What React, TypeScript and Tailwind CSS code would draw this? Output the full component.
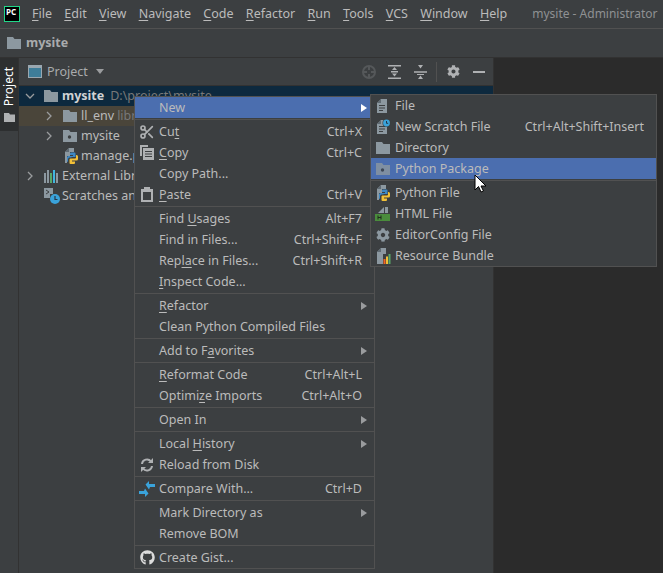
import React from 'react';
import { FaCog, FaGithub } from 'react-icons/fa';
import { Scissors } from 'lucide-react';

const Folder = ({ dot = false, className = '' }: { dot?: boolean; className?: string }) => (
  <svg width="14" height="12" viewBox="0 0 14 12" className={`shrink-0 ${className}`}>
    <path d="M0 0h6l1.5 2H14v10H0z" fill="#8c98a0" />
    {dot && <circle cx="6.5" cy="7" r="1.7" fill="#3c3f41" />}
  </svg>
);

const PyFile = () => (
  <svg width="16" height="16" viewBox="0 0 16 16">
    <path d="M6 0h5v4H7v4H4v7H2V4z" fill="#8c98a0" />
    <path d="M6 0v4H2z" fill="#5f6a72" />
    <path d="M8 4.500h3.500a1 1 0 0 1 1 1V9H8.500v.6H6.500A2 2 0 0 0 5 11.500V14h-.2A1.800 1.800 0 0 1 4 12V9.500A1.500 1.500 0 0 1 5.500 8H10V7H7V5.500a1 1 0 0 1 1-1z" fill="#3d88c4" />
    <path d="M13 7h.5A1.500 1.500 0 0 1 15 8.500V11a1.500 1.500 0 0 1-1.500 1.500H9v1h3V15a1 1 0 0 1-1 1H7.500a1 1 0 0 1-1-1v-3.500a1 1 0 0 1 1-1H12A1 1 0 0 0 13 9.500z" fill="#f2c037" />
  </svg>
);

const DocIcon = ({ clock = false }: { clock?: boolean }) => (
  <svg width="16" height="16" viewBox="0 0 16 16">
    <path d="M6 1L2 5v10h10V1z" fill="#8c98a0" />
    <path d="M6 1v4H2z" fill="#5f6a72" />
    <path d="M4 7h6v1H4zM4 9.500h6v1H4zM4 12h4v1H4z" fill="#3c3f41" />
    {clock && (
      <>
        <circle cx="11.500" cy="4" r="4" fill="#3c3f41" />
        <circle cx="11.500" cy="4" r="3.400" fill="#3aa3db" />
        <path d="M11.500 2v2.300h1.700" stroke="#23384a" strokeWidth="1" fill="none" />
      </>
    )}
  </svg>
);

const HtmlIcon = () => (
  <svg width="16" height="16" viewBox="0 0 16 16">
    <path d="M9 1v6H3z" fill="#8c98a0" />
    <path d="M10 1h3v6h-3z" fill="#8c98a0" />
    <rect x="0" y="8" width="15" height="7" fill="#4a8c3c" />
    <path d="M3 9.500v4M6 9.500v4M3 11.500h3" stroke="#1f2a1c" strokeWidth="1" fill="none" />
  </svg>
);

const BundleIcon = () => (
  <svg width="16" height="16" viewBox="0 0 16 16">
    <path d="M6 0h5v6H8v10H2V4z" fill="#8c98a0" />
    <path d="M6 0v4H2z" fill="#5f6a72" />
    <rect x="8.500" y="11" width="2" height="5" fill="#f26522" />
    <rect x="11" y="8.500" width="2" height="7.500" fill="#f2c037" />
    <rect x="13.500" y="6" width="2" height="10" fill="#59a869" />
  </svg>
);

const PasteIcon = () => (
  <svg width="14" height="15" viewBox="0 0 14 15">
    <path d="M1 2h3V0h6v2h3v13H1zM3 5v8h8V5z" fill="#afb1b3" fillRule="evenodd" />
  </svg>
);

const CopyIcon = () => (
  <svg width="14" height="15" viewBox="0 0 14 15">
    <path d="M0 0h8v2H2v9H0z" fill="#afb1b3" />
    <path d="M3 3h11v12H3z" fill="#afb1b3" />
    <path d="M5 6h7v1H5zM5 8.500h7v1H5zM5 11h7v1H5z" fill="#3c3f41" />
  </svg>
);

const ReloadIcon = () => (
  <svg width="14" height="14" viewBox="0 0 14 14" fill="none" stroke="#afb1b3" strokeWidth="2">
    <path d="M2 6a5 5 0 0 1 9-2.500M12 8a5 5 0 0 1-9 2.500" />
    <path d="M13 0v5H8zM1 14V9h5z" fill="#afb1b3" stroke="none" />
  </svg>
);

const CompareIcon = () => (
  <svg width="16" height="16" viewBox="0 0 16 16" fill="#3aa3db">
    <path d="M10 0v3h6v3h-5l-1 2.500L6.500 3.500z" />
    <path d="M6 16v-3H0v-3h5l1-2.500 3.500 5z" />
  </svg>
);

const ScratchIcon = () => (
  <svg width="16" height="16" viewBox="0 0 16 16">
    <path d="M0 0h9v6H6v4H0z" fill="#8c98a0" />
    <path d="M2 2l3 2-3 2" stroke="#3c3f41" fill="none" />
    <circle cx="11" cy="11" r="5" fill="#3aa3db" />
    <path d="M11 8v3.500h2.500" stroke="#23384a" strokeWidth="1.200" fill="none" />
  </svg>
);

const LibIcon = () => (
  <svg width="14" height="13" viewBox="0 0 14 13">
    <rect x="0" y="3" width="2" height="10" fill="#8c98a0" />
    <rect x="3" y="0" width="2" height="13" fill="#8c98a0" />
    <rect x="6" y="3" width="2" height="10" fill="#59a869" />
    <rect x="9" y="0" width="2" height="13" fill="#40b6e0" />
    <rect x="12" y="3" width="2" height="10" fill="#8c98a0" />
  </svg>
);

const Chevron = ({ open = false }: { open?: boolean }) => (
  <svg width="10" height="10" viewBox="0 0 10 10" fill="none" stroke="#9a9c9e" strokeWidth="1.300" className="shrink-0 -ml-1">
    {open ? <path d="M1 3l4 4 4-4" /> : <path d="M3 1l4 4-4 4" />}
  </svg>
);

const Arrow = ({ color = '#9a9c9e' }: { color?: string }) => (
  <svg width="6" height="8" viewBox="0 0 6 8" className="shrink-0">
    <path d="M0 0l6 4-6 4z" fill={color} />
  </svg>
);

const U = ({ children }: { children: React.ReactNode }) => (
  <span className="underline underline-offset-2">{children}</span>
);

const Sep = () => (
  <div className="h-[3px] flex items-center">
    <div className="h-px w-full bg-[#515151]" />
  </div>
);

interface RowProps {
  icon?: React.ReactNode;
  label: React.ReactNode;
  keys?: string;
  sub?: boolean;
  active?: boolean;
}

const Row = ({ icon, label, keys, sub, active }: RowProps) => (
  <div className={`h-[21px] flex items-center pr-[6px] ${active ? 'bg-[#4b6eaf]' : ''}`}>
    <div className="w-[24px] shrink-0 flex items-center justify-center text-[#afb1b3]">{icon}</div>
    <div className="flex-1 pt-px whitespace-nowrap">{label}</div>
    {keys && <div className="pr-[6px] pt-px whitespace-nowrap">{keys}</div>}
    {sub && (
      <div className="pr-px">
        <Arrow color={active ? '#ffffff' : '#9a9c9e'} />
      </div>
    )}
  </div>
);

const SubRow = ({ icon, label, keys, active }: RowProps) => (
  <div className={`h-[21px] flex items-center ${active ? 'bg-[#4b6eaf]' : ''}`}>
    <div className="w-[24px] shrink-0 flex items-center justify-center text-[#afb1b3]">{icon}</div>
    <div className="flex-1 pt-px whitespace-nowrap">{label}</div>
    {keys && <div className="pr-[12px] pt-px whitespace-nowrap">{keys}</div>}
  </div>
);

const TreeRow = ({
  indent,
  chevron,
  icon,
  className = '',
  children,
}: {
  indent: string;
  chevron?: React.ReactNode;
  icon: React.ReactNode;
  className?: string;
  children: React.ReactNode;
}) => (
  <div className={`h-5 flex items-center whitespace-nowrap ${indent} ${className}`}>
    <div className="w-[15px] shrink-0">{chevron}</div>
    <div className="w-[18px] shrink-0 flex items-center">{icon}</div>
    <div className="pt-px">{children}</div>
  </div>
);

const menuItems = ['File', 'Edit', 'View', 'Navigate', 'Code', 'Refactor', 'Run', 'Tools', 'VCS', 'Window', 'Help'];

export default function App() {
  return (
    <div className="relative w-[663px] h-[573px] overflow-hidden bg-[#3c3f41] text-[#bbbbbb] text-[12.5px] flex flex-col font-['Noto_Sans',sans-serif]">
      {/* title bar */}
      <div className="h-[29px] shrink-0 flex items-center border-b border-[#515151] pl-1">
        <div className="w-4 h-4 border border-[#21d789] bg-black text-white text-[8px] leading-[9px] font-bold pl-px shrink-0">
          PC
        </div>
        <div className="flex gap-[12.300px] ml-[12px] pt-px whitespace-nowrap">
          {menuItems.map((m) => (
            <span key={m}>
              <U>{m[0]}</U>
              {m.slice(1)}
            </span>
          ))}
        </div>
        <div className="ml-[25px] whitespace-nowrap text-[12px] text-[#8f9193]">mysite - Administrator</div>
      </div>

      {/* nav bar */}
      <div className="h-[29px] shrink-0 flex items-center gap-[5px] pl-[7px] border-b border-[#323232]">
        <Folder />
        <span className="font-bold text-[#a9abad]">mysite</span>
      </div>

      <div className="flex-1 flex min-h-0">
        {/* tool strip */}
        <div className="w-[19px] shrink-0 border-r border-[#323232]">
          <div className="h-[73px] bg-[#2d2f30] flex flex-col items-center pt-[9px] gap-[7px]">
            <span className="[writing-mode:vertical-rl] rotate-180 text-white text-[12px] leading-[12px]">Project</span>
            <svg width="11" height="9" viewBox="0 0 11 9">
              <path d="M0 0h5l1 1.500h5V9H0z" fill="#afb1b3" />
            </svg>
          </div>
        </div>

        {/* project panel */}
        <div className="w-[475px] shrink-0 border-r border-[#323232] flex flex-col">
          <div className="h-[28px] shrink-0 flex items-center pl-[9px] pr-[8px] border-b border-[#323232]">
            <svg width="14" height="13" viewBox="0 0 14 13" className="mr-[5px]">
              <rect x="0.500" y="0.500" width="13" height="12" fill="#3e7d99" stroke="#9aa7b0" />
              <rect x="1" y="1" width="12" height="2" fill="#9aa7b0" />
            </svg>
            <span className="pt-px text-[#a9abad]">Project</span>
            <svg width="8" height="5" viewBox="0 0 8 5" className="ml-[8px]">
              <path d="M0 0h8L4 5z" fill="#9a9c9e" />
            </svg>
            <div className="flex-1" />
            <div className="flex items-center text-[#afb1b3]">
              <svg width="14" height="14" viewBox="0 0 14 14" fill="none" stroke="#55585a" strokeWidth="2" className="mr-[12px]">
                <circle cx="7" cy="7" r="6" />
                <path d="M7 1v4M7 9v4M1 7h4M9 7h4" />
              </svg>
              <svg width="13" height="14" viewBox="0 0 13 14" fill="#afb1b3" className="mr-[13px]">
                <path d="M0 0h13v1.500H0zM0 12.500h13V14H0zM3 6h7v1.500H3zM6.500 2l2.500 3H4zM6.500 11.500L4 8.500h5z" />
              </svg>
              <svg width="13" height="14" viewBox="0 0 13 14" fill="#afb1b3" className="mr-[9px]">
                <path d="M0 6.200h13v1.500H0zM3 9h7v1H3zM6.500 3.500L4 0h5zM6.500 10.500L9 14H4z" />
              </svg>
              <div className="w-px h-[20px] bg-[#515151] mr-[10px]" />
              <FaCog size={13} className="mr-[13px]" />
              <div className="w-[12px] h-[2px] bg-[#afb1b3]" />
            </div>
          </div>

          <div className="flex flex-col">
            <TreeRow indent="pl-[10px]" chevron={<Chevron open />} icon={<Folder />} className="bg-[#0d293e]">
              <span className="font-bold text-[#d0d2d4]">mysite</span>
              <span className="ml-[6px] text-[#787878]">D:\project\mysite</span>
            </TreeRow>
            <TreeRow indent="pl-[29px]" chevron={<Chevron />} icon={<Folder />} className="bg-[#4a453a]">
              <span>ll_env</span>
              <span className="ml-[3px] text-[#787878]">library root</span>
            </TreeRow>
            <TreeRow indent="pl-[29px]" chevron={<Chevron />} icon={<Folder dot />}>
              mysite
            </TreeRow>
            <TreeRow indent="pl-[29px]" icon={<PyFile />}>
              manage.py
            </TreeRow>
            <TreeRow indent="pl-[10px]" chevron={<Chevron />} icon={<LibIcon />}>
              External Libraries
            </TreeRow>
            <TreeRow indent="pl-[10px]" icon={<ScratchIcon />}>
              Scratches and Consoles
            </TreeRow>
          </div>
        </div>

        <div className="flex-1 bg-[#2b2b2b]" />
      </div>

      {/* context menu */}
      <div className="absolute left-[134px] top-[96px] w-[241px] bg-[#3c3f41] border border-[#515151]">
        <Row label="New" sub active />
        <Sep />
        <Row icon={<Scissors size={16} strokeWidth={2.500} />} label={<>Cu<U>t</U></>} keys="Ctrl+X" />
        <Row icon={<CopyIcon />} label={<><U>C</U>opy</>} keys="Ctrl+C" />
        <Row label="Copy Path..." />
        <Row icon={<PasteIcon />} label={<><U>P</U>aste</>} keys="Ctrl+V" />
        <Sep />
        <Row label={<>Find <U>U</U>sages</>} keys="Alt+F7" />
        <Row label="Find in Files..." keys="Ctrl+Shift+F" />
        <Row label={<>Rep<U>la</U>ce in Files...</>} keys="Ctrl+Shift+R" />
        <Row label={<><U>I</U>nspect Code...</>} />
        <Sep />
        <Row label={<><U>R</U>efactor</>} sub />
        <Row label="Clean Python Compiled Files" />
        <Sep />
        <Row label={<>Add to F<U>a</U>vorites</>} sub />
        <Sep />
        <Row label={<><U>R</U>eformat Code</>} keys="Ctrl+Alt+L" />
        <Row label={<>Optimi<U>z</U>e Imports</>} keys="Ctrl+Alt+O" />
        <Sep />
        <Row label="Open In" sub />
        <Sep />
        <Row label={<>Local <U>H</U>istory</>} sub />
        <Row icon={<ReloadIcon />} label="Reload from Disk" />
        <Sep />
        <Row icon={<CompareIcon />} label="Compare With..." keys="Ctrl+D" />
        <Sep />
        <Row label="Mark Directory as" sub />
        <Row label="Remove BOM" />
        <Sep />
        <Row icon={<FaGithub size={15} className="text-[#dcdcdc]" />} label="Create Gist..." />
      </div>

      {/* New submenu */}
      <div className="absolute left-[370px] top-[94px] w-[287px] bg-[#3c3f41] border border-[#515151]">
        <SubRow icon={<DocIcon />} label="File" />
        <SubRow icon={<DocIcon clock />} label="New Scratch File" keys="Ctrl+Alt+Shift+Insert" />
        <SubRow icon={<Folder />} label="Directory" />
        <SubRow icon={<Folder dot className="opacity-80" />} label="Python Package" active />
        <Sep />
        <SubRow icon={<PyFile />} label="Python File" />
        <SubRow icon={<HtmlIcon />} label="HTML File" />
        <SubRow icon={<FaCog size={14} className="text-[#8c98a0]" />} label="EditorConfig File" />
        <SubRow icon={<BundleIcon />} label="Resource Bundle" />
      </div>

      {/* mouse pointer */}
      <svg width="13" height="20" viewBox="0 0 13 20" className="absolute left-[474px] top-[174px]">
        <path d="M1 1v15l3.500-3.500L7 18l2.500-1-2.500-5h5z" fill="#ffffff" stroke="#000000" strokeWidth="1" />
      </svg>
    </div>
  );
}
